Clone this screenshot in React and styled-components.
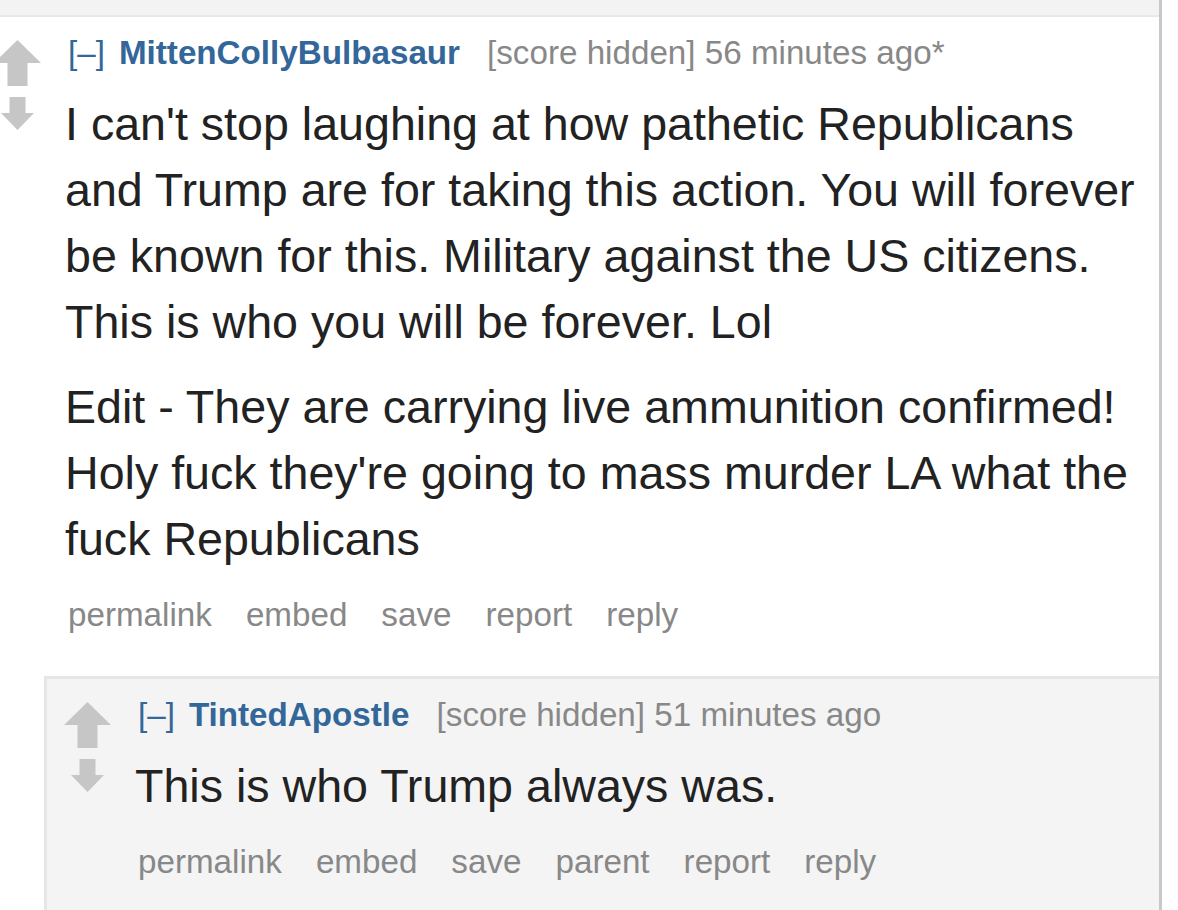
import React from 'react';
import styled, { createGlobalStyle } from 'styled-components';

const GlobalStyle = createGlobalStyle`
  body {
    margin: 0;
    background: #fff;
    overflow: hidden;
    font-family: "Liberation Sans", Arial, sans-serif;
  }
`;

const Page = styled.div`
  width: 1182px;
  min-height: 100vh;
  margin-left: -23px;
  border-right: 3px solid #c8c8c8;
  background: #fff;
`;

const TopBand = styled.div`
  height: 15px;
  background: #f3f3f3;
  border-bottom: 2px solid #e8e8e8;
`;

const CommentWrap = styled.div`
  padding: 16px 0 0 17px;
`;

const Row = styled.div`
  display: flex;
  gap: 24px;
`;

const Midcol = styled.div`
  width: 47px;
  flex: none;
  margin-top: 7px;
  display: flex;
  flex-direction: column;
  align-items: center;

  svg {
    display: block;
    filter: blur(0.5px);
  }
`;

const DownArrow = styled.svg`
  margin-top: 11px;
`;

const Entry = styled.div`
  flex: 1;
  min-width: 0;
  padding-right: 8px;
`;

const Tagline = styled.div`
  padding-left: 3px;
  font-size: 33.2px;
  line-height: 40px;
  color: #888;
  white-space: nowrap;
`;

const Expand = styled.span`
  color: #369;
  margin-right: 14px;
`;

const Author = styled.span`
  color: #369;
  font-weight: bold;
  margin-right: 27px;
`;

const Body = styled.div`
  margin-top: 18px;
  font-size: 46.6px;
  line-height: 66px;
  color: #222;

  p {
    margin: 0 0 19px;
  }
  p:last-child {
    margin-bottom: 0;
  }
`;

const Buttons = styled.ul`
  display: flex;
  gap: 34px;
  list-style: none;
  margin: 23px 0 0;
  padding: 0 0 0 3px;
  font-size: 33.2px;
  line-height: 40px;
  color: #888;
`;

const Child = styled.div`
  margin: 41px 0 0 50px;
  border-top: 3px solid #e6e6e6;
  border-left: 3px solid #e6e6e6;
  background: #f4f4f4;
  padding-bottom: 60px;
`;

const ARROW = '#c6c6c6';

const Arrows = () => (
  <Midcol>
    <svg width="47" height="46" viewBox="0 0 47 46">
      <polygon points="23.5,0 47,23 33.5,23 33.5,46 13.5,46 13.5,23 0,23" fill={ARROW} />
    </svg>
    <DownArrow width="33" height="33" viewBox="0 0 33 33">
      <polygon points="8.5,0 24.5,0 24.5,16 33,16 16.5,33 0,16 8.5,16" fill={ARROW} />
    </DownArrow>
  </Midcol>
);

const Comment = ({ author, time, paragraphs, buttons, children }) => (
  <CommentWrap>
    <Row>
      <Arrows />
      <Entry>
        <Tagline>
          <Expand>[–]</Expand>
          <Author>{author}</Author>
          [score hidden] {time}
        </Tagline>
        <Body>
          {paragraphs.map((p, i) => <p key={i}>{p}</p>)}
        </Body>
        <Buttons>
          {buttons.map(b => <li key={b}>{b}</li>)}
        </Buttons>
      </Entry>
    </Row>
    {children}
  </CommentWrap>
);

export default function App() {
  return (
    <>
      <GlobalStyle />
      <Page>
        <TopBand />
        <Comment
          author="MittenCollyBulbasaur"
          time="56 minutes ago*"
          paragraphs={[
            "I can't stop laughing at how pathetic Republicans and Trump are for taking this action. You will forever be known for this. Military against the US citizens. This is who you will be forever. Lol",
            "Edit - They are carrying live ammunition confirmed! Holy fuck they're going to mass murder LA what the fuck Republicans",
          ]}
          buttons={['permalink', 'embed', 'save', 'report', 'reply']}
        >
          <Child>
            <Comment
              author="TintedApostle"
              time="51 minutes ago"
              paragraphs={['This is who Trump always was.']}
              buttons={['permalink', 'embed', 'save', 'parent', 'report', 'reply']}
            />
          </Child>
        </Comment>
      </Page>
    </>
  );
}
